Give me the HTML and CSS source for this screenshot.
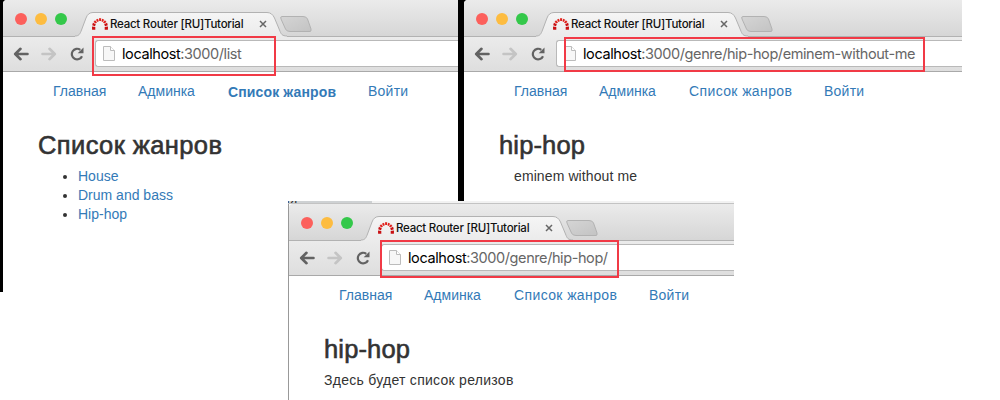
FILE: index.html
```
<!DOCTYPE html>
<html lang="ru">
<head>
<meta charset="utf-8">
<title>React Router [RU]Tutorial</title>
<link rel="stylesheet" href="styles.css">
</head>
<body>
<svg class="defs" width="0" height="0">
  <defs>
    <linearGradient id="tabFill" x1="0" y1="0" x2="0" y2="1"><stop offset="0" stop-color="#f5f5f5"/><stop offset="1" stop-color="#ebebeb"/></linearGradient>
    <linearGradient id="newFill" x1="0" y1="0" x2="1" y2="1"><stop offset="0" stop-color="#d5d5d5"/><stop offset="1" stop-color="#c3c3c3"/></linearGradient>
    <symbol id="tab" viewBox="0 0 240 26">
      <path d="M0 25 C4 25 5 23 6.500 19 L11 7 Q13 1.500 18 1.500 H192 Q197 1.500 199.500 7 L204.500 19 C206 23 207 25 212 25 V26 H0Z" fill="url(#tabFill)"/>
      <path d="M0 25 C4 25 5 23 6.500 19 L11 7 Q13 1.500 18 1.500 H192 Q197 1.500 199.500 7 L204.500 19 C206 23 207 25 212 25" fill="none" stroke="#b2b2b2"/>
      <path d="M207 5.500 H228 Q231.500 5.500 232.500 8 L236 18 Q236.500 20.500 235 20.500 H215 Q211.500 20.500 210.500 18 L206 8 Q205 5.500 207 5.500Z" fill="url(#newFill)" stroke="#b2b2b2"/>
    </symbol>
    <symbol id="arch" viewBox="0 0 16 12">
      <g fill="#c90f12"><path d="M0 8.500l3.300.4v2.800H.1zM.9 4.800l2.900 1.500-.8 2L.2 7.200zM12.700 8.900l3.300-.4-.1 3.200h-3.200zM15.100 4.800l-2.900 1.500.8 2 2.800-1.100z"/></g>
      <g fill="#e1201b"><path d="M3 2.200l2 2-1.200 1.300-2.300-1.500zM6 .7l.8 2.600-1.300.6L3.900 1.800zM7 .3h2.200L9 3H7.200zM10.200.7l2 1.100-1.600 2.100-1.200-.6zM13 2.200l1.500 1.800-2.300 1.500L11 4.200z"/></g>
    </symbol>
    <symbol id="arrow" viewBox="0 0 16 14"><path d="M7.500 1.800L2.200 7l5.300 5.200M2.500 7H14.500" fill="none" stroke="currentColor" stroke-width="2.600" stroke-linecap="round" stroke-linejoin="round"/></symbol>
    <symbol id="reload" viewBox="0 0 14 14"><path d="M12 9.200A5.300 5.300 0 1 1 10.300 2.800" fill="none" stroke="currentColor" stroke-width="2.200"/><path d="M13.500.5V6.300H7.700z" fill="currentColor"/></symbol>
    <symbol id="page" viewBox="0 0 12 15"><path d="M.5.5H7.500L11.500 4.500V14.500H.5z" fill="#f7f7f7" stroke="#bcbcbc"/><path d="M7.500.5V4.500H11.500" fill="#fff" stroke="#bcbcbc"/></symbol>
    <symbol id="cross" viewBox="0 0 8 8"><path d="M1 1l6 6M7 1L1 7" stroke="#666" stroke-width="1.500"/></symbol>
  </defs>
</svg>
<div class="desktop">
  <div class="backdrop"></div>

  <section class="window window-list">
    <header class="tabstrip">
      <div class="lights"><i class="red"></i><i class="yellow"></i><i class="green"></i></div>
      <div class="tab"><svg class="tab-shape"><use href="#tab"/></svg><svg class="favicon"><use href="#arch"/></svg><span class="tab-title">React Router [RU]Tutorial</span><svg class="close"><use href="#cross"/></svg></div>
    </header>
    <div class="toolbar">
      <svg class="back"><use href="#arrow"/></svg><svg class="forward"><use href="#arrow"/></svg><svg class="reload"><use href="#reload"/></svg>
      <div class="omnibox"><svg class="page-icon"><use href="#page"/></svg><span class="url"><b>localhost</b>:3000/list</span></div>
    </div>
    <main class="content">
      <nav><a class="n1">Главная</a><a class="n2">Админка</a><a class="n3 active">Список жанров</a><a class="n4">Войти</a></nav>
      <h1>Список жанров</h1>
      <ul><li><a>House</a></li><li><a>Drum and bass</a></li><li><a>Hip-hop</a></li></ul>
    </main>
    <div class="mark mark-list"></div>
  </section>

  <section class="window window-album">
    <header class="tabstrip">
      <div class="lights"><i class="red"></i><i class="yellow"></i><i class="green"></i></div>
      <div class="tab"><svg class="tab-shape"><use href="#tab"/></svg><svg class="favicon"><use href="#arch"/></svg><span class="tab-title">React Router [RU]Tutorial</span><svg class="close"><use href="#cross"/></svg></div>
    </header>
    <div class="toolbar">
      <svg class="back"><use href="#arrow"/></svg><svg class="forward"><use href="#arrow"/></svg><svg class="reload"><use href="#reload"/></svg>
      <div class="omnibox"><svg class="page-icon"><use href="#page"/></svg><span class="url"><b>localhost</b>:3000/genre/hip-hop/eminem-without-me</span></div>
    </div>
    <main class="content">
      <nav><a class="n1">Главная</a><a class="n2">Админка</a><a class="n3">Список жанров</a><a class="n4">Войти</a></nav>
      <h1 class="latin">hip-hop</h1>
      <p class="release">eminem without me</p>
    </main>
    <div class="mark mark-album"></div>
  </section>

  <div class="behind"><span>ая</span></div>
  <section class="window window-genre">
    <header class="tabstrip">
      <div class="lights"><i class="red"></i><i class="yellow"></i><i class="green"></i></div>
      <div class="tab"><svg class="tab-shape"><use href="#tab"/></svg><svg class="favicon"><use href="#arch"/></svg><span class="tab-title">React Router [RU]Tutorial</span><svg class="close"><use href="#cross"/></svg></div>
    </header>
    <div class="toolbar">
      <svg class="back"><use href="#arrow"/></svg><svg class="forward"><use href="#arrow"/></svg><svg class="reload"><use href="#reload"/></svg>
      <div class="omnibox"><svg class="page-icon"><use href="#page"/></svg><span class="url"><b>localhost</b>:3000/genre/hip-hop/</span></div>
    </div>
    <main class="content">
      <nav><a class="n1">Главная</a><a class="n2">Админка</a><a class="n3">Список жанров</a><a class="n4">Войти</a></nav>
      <h1 class="latin">hip-hop</h1>
      <p class="note">Здесь будет список релизов</p>
    </main>
    <div class="mark mark-genre"></div>
  </section>
</div>
</body>
</html>
```
FILE: styles.css
```
* { box-sizing: border-box; }
body { margin: 0; background: #fff; overflow: hidden; }
.defs { position: absolute; }
.desktop { position: relative; width: 1000px; height: 400px; overflow: hidden; font-family: "Liberation Sans", Arial, sans-serif; }
.backdrop { position: absolute; left: 0; top: 0; width: 464px; height: 292px; background: linear-gradient(#000, #000) 0 0 / 10px 292px no-repeat, linear-gradient(#000, #000) 450px 0 / 20px 201px no-repeat; }

.window { position: absolute; background: #fff; }
.window-list { left: 3px; top: 0; width: 455px; height: 292px; border-top-left-radius: 4px; }
.window-album { left: 464px; top: 0; width: 498px; height: 201px; border-top-left-radius: 4px; }
.window-album::before { content: ""; position: absolute; z-index: -1; left: -4px; top: 0; width: 8px; height: 8px; background: #000; }
.window-genre { left: 289px; top: 204px; width: 445px; height: 196px; box-shadow: -1px 0 0 #999; }
.behind { position: absolute; left: 288px; top: 201px; width: 446px; height: 3px; overflow: hidden; background: linear-gradient(90deg, #ced1d3 84px, #f2f2f2 84px); border-bottom: 1px solid #c3c3c3; font-size: 14px; line-height: 14px; }
.behind span { display: block; margin: -9px 0 0 -6px; color: #333; }

.tabstrip { display: flex; height: 37px; background: linear-gradient(#ebebeb, #d6d6d6); border-bottom: 1px solid #b2b2b2; border-top-left-radius: 4px; }
.lights { display: flex; align-items: center; gap: 8px; width: 72px; height: 38px; padding-left: 12px; flex: none; }
.lights i { width: 12px; height: 12px; border-radius: 50%; }
.red { background: #fc605c; }
.yellow { background: #fdbc40; }
.green { background: #34c84a; }
.tab { position: relative; display: flex; align-items: center; width: 240px; height: 26px; margin-top: 11px; padding-left: 17px; }
.tab-shape { position: absolute; left: 0; top: 0; width: 240px; height: 26px; }
.favicon { position: relative; width: 16px; height: 12px; flex: none; margin-top: -1px; }
.tab-title { position: relative; width: 150px; margin-left: 2px; font: 500 11.5px/16px Inter, sans-serif; letter-spacing: -.24px; color: #111; white-space: nowrap; }
.close { position: relative; width: 8px; height: 8px; flex: none; margin-left: -1px; }

.toolbar { display: flex; align-items: center; height: 35px; padding: 0 0 1px 10px; background: linear-gradient(#ebebeb, #dedede); border-bottom: 1px solid #a9a9a9; color: #626262; }
.toolbar > svg { flex: none; }
.back { width: 16px; height: 14px; }
.forward { width: 16px; height: 14px; margin-left: 12px; color: #c4c4c4; transform: scaleX(-1); }
.reload { width: 14px; height: 14px; margin-left: 13px; }
.omnibox { display: flex; align-items: center; flex: 1; height: 27px; margin-left: 11px; padding-left: 7px; background: #fff; border: 1px solid #b9b9b9; border-right: 0; border-radius: 3px 0 0 3px; }
.page-icon { width: 12px; height: 15px; flex: none; }
.url { margin-left: 7px; font: 400 14.5px/20px Inter, sans-serif; letter-spacing: -.41px; color: #666; white-space: nowrap; }
.url b { font-weight: 400; color: #000; }

.content { padding: 10px 0 0 35px; font-size: 14px; line-height: 19px; color: #333; white-space: nowrap; }
nav { display: flex; height: 20px; padding-left: 15px; }
a { color: #337ab7; }
.n1 { width: 85px; }
.n2 { width: 90px; }
.n3 { width: 135px; letter-spacing: .38px; }
.n3.active { width: 140px; padding-top: 1px; font-weight: 700; letter-spacing: .13px; }
.n4 { letter-spacing: .25px; }
h1 { margin: 29px 0 0; font-size: 25.5px; line-height: 28px; font-weight: 400; letter-spacing: .4px; color: #333; -webkit-text-stroke: .6px #333; }
.latin { letter-spacing: .15px; }
ul { margin: 8px 0 0; padding-left: 40px; }
p { margin: 8px 0 0; }
.release { padding-left: 15px; letter-spacing: .1px; }
.note { letter-spacing: .27px; }

.mark { position: absolute; border: 2px solid #f13a46; }
.mark-list { left: 89px; top: 36px; width: 184px; height: 40px; }
.mark-album { left: 100px; top: 37px; width: 361px; height: 35px; }
.mark-genre { left: 91px; top: 36px; width: 239px; height: 38px; }
```
